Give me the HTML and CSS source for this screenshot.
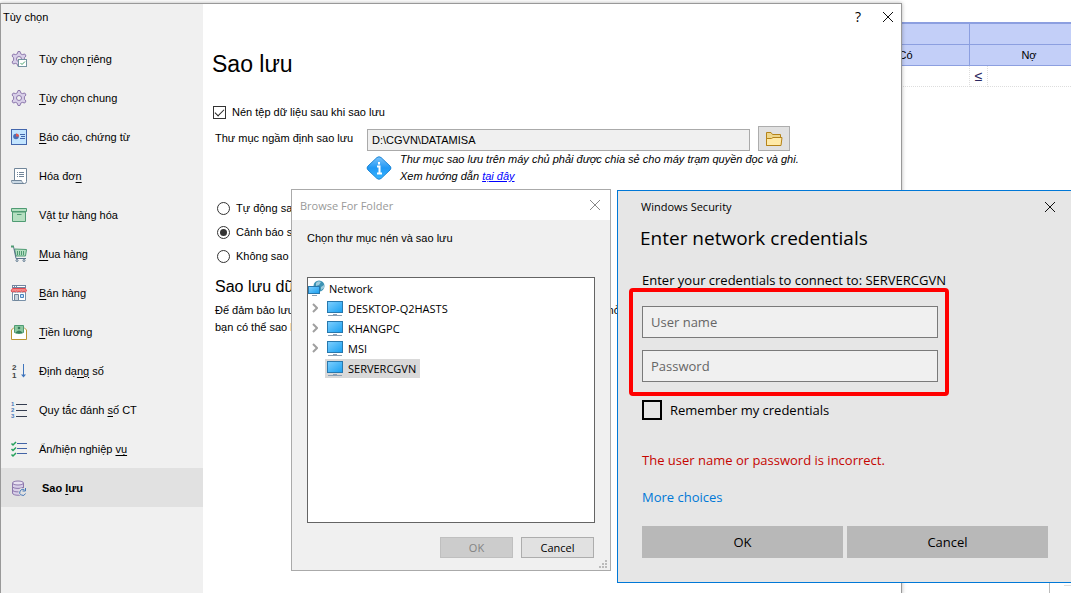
FILE: index.html
```html
<!DOCTYPE html>
<html lang="vi">
<head>
    <meta charset="UTF-8">
    <meta name="viewport" content="width=device-width, initial-scale=1.0">
    <title>Tùy chọn - Sao lưu</title>
    <link rel="stylesheet" href="styles.css">
</head>
<body>
    <svg width="0" height="0" class="defs" aria-hidden="true">
        <defs>
            <linearGradient id="screen" x1="0" y1="0" x2="1" y2="1">
                <stop offset="0" stop-color="#7fd0ff"/>
                <stop offset="1" stop-color="#189ff0"/>
            </linearGradient>
            <linearGradient id="info" x1="0" y1="0" x2="0" y2="1">
                <stop offset="0" stop-color="#7cc4fb"/>
                <stop offset="0.5" stop-color="#1f98f5"/>
                <stop offset="1" stop-color="#38b6ff"/>
            </linearGradient>
            <symbol id="gear" viewBox="0 0 16 16">
                <path d="M7 .5h2l.7 2.300 1.600.8 2.500-.6 1.200 2-1.600 1.800v2.400l1.600 1.800-1.200 2-2.500-.6-1.600.8L9 15.500H7l-.7-2.300-1.600-.8-2.500.6-1.200-2 1.600-1.800V6.800L1 5l1.200-2 2.500.6 1.600-.8z" fill="#d8cfe8" stroke="#8d78ad"/>
                <circle cx="8" cy="8" r="2.500" fill="#f0f0f0" stroke="#8d78ad"/>
            </symbol>
            <symbol id="computer" viewBox="0 0 18 17">
                <rect x="1.500" y="1.500" width="15" height="11" fill="url(#screen)" stroke="#2878ad"/>
                <path d="M7 14.500h4M2 15.500h14" stroke="#8ba0b5"/>
            </symbol>
        </defs>
    </svg>

    <div class="desktop">
        <table class="ledger">
            <colgroup><col class="wide"><col class="narrow"><col></colgroup>
            <thead>
                <tr><th></th><th colspan="2"></th></tr>
                <tr><th>Có</th><th colspan="2">Nợ</th></tr>
            </thead>
            <tbody>
                <tr><td></td><td class="op">≤</td><td></td></tr>
            </tbody>
        </table>
        <div class="app-corner"><hr></div>

        <section class="window options">
            <nav class="sidebar">
                <div class="options-title">Tùy chọn</div>
                <ul>
                    <li><a href="#"><svg viewBox="0 0 16 16"><use href="#gear" width="16" height="16"/><rect x="7.500" y="8.500" width="8" height="7" fill="#fff" stroke="#7392a0"/><path d="M9.500 12l1.500 1.500 3-3" fill="none" stroke="#45a06b"/></svg><span>Tùy chọn <u>r</u>iêng</span></a></li>
                    <li><a href="#"><svg viewBox="0 0 16 16"><use href="#gear" width="16" height="16"/></svg><span><u>T</u>ùy chọn chung</span></a></li>
                    <li><a href="#"><svg viewBox="0 0 16 16"><rect x=".5" y=".5" width="15" height="15" fill="#c3e5ff" stroke="#4366ac"/><circle cx="5" cy="7.500" r="2.800" fill="#4c6eb4"/><path d="M5 7.500V4.500a3 3 0 0 1 3 3z" fill="#e2584e"/><path d="M9 5.500h5M10 7.500h4M9 9.500h5" stroke="#4366ac"/></svg><span><u>B</u>áo cáo, chứng từ</span></a></li>
                    <li><a href="#"><svg viewBox="0 0 16 16"><path d="M3.500 12V.5h12v13q0 2-2 2h-11q-2 0-2-3h10q0 3 2.500 3" fill="#fff" stroke="#71869a"/><path d="M1 13h9l1 2H3q-2 0-2-2z" fill="#c9d8e4"/><path d="M6 4.500h1M8 4.500h5M6 6.500h1M8 6.500h5M6 8.500h1M8 8.500h5" stroke="#71869a"/></svg><span>Hóa đơ<u>n</u></span></a></li>
                    <li><a href="#"><svg viewBox="0 0 16 16"><path d="M1.500 5h13v9.500h-13z" fill="#b5dfc1" stroke="#4f9b73"/><path d="M.5 1.500h15v3H.5z" fill="#b5dfc1" stroke="#4f9b73"/><path d="M6 7.500h4.500" stroke="#4f9b73"/></svg><span>Vật <u>t</u>ư hàng hóa</span></a></li>
                    <li><a href="#"><svg viewBox="0 0 16 16"><path d="M3.500 3l12 .5-1 6.500H5z" fill="#b5dfc1" stroke="#4f9b73"/><path d="M6.500 5v4M8.500 5v4M10.500 5v4M12.500 5v4" stroke="#4f9b73"/><path d="M0 .5h2.500l2.500 12h10" fill="none" stroke="#59748b"/><path d="M0 .5h3" stroke="#4f9b73" stroke-width="2"/><circle cx="6" cy="14.500" r="1" fill="#fff" stroke="#59748b"/><circle cx="13" cy="14.500" r="1" fill="#fff" stroke="#59748b"/></svg><span><u>M</u>ua hàng</span></a></li>
                    <li><a href="#"><svg viewBox="0 0 16 16"><path d="M1.500 7v8.500h13V7z" fill="#fff" stroke="#7890a8"/><path d="M1 0h14v3H1z" fill="#7185a0"/><path d="M2 1.500h1M4 1.500h1M6 1.500h8" stroke="#fff"/><path d="M1.500 3.500h13l1 2.500q-1 2-2.500 0-1.250 2-2.500 0-1.250 2-2.500 0-1.250 2-2.500 0-1.250 2-2.500 0-1.500 2-3 0z" fill="#f58a88" stroke="#e04b52"/><path d="M3.500 9.500h4v6h-4z" fill="#c9d5df" stroke="#71869a"/><path d="M9.500 9.500h3v3h-3z" fill="#c3e5ff" stroke="#4d83bd"/></svg><span><u>B</u>án hàng</span></a></li>
                    <li><a href="#"><svg viewBox="0 0 16 16"><path d="M.5 6L3 3.500h10L15.500 6v9.500H.5z" fill="#fff" stroke="#bb9431"/><path d="M3.500 1.500h9v7l-3 1h-3l-3-1z" fill="#8cc9a0" stroke="#4f9b73"/><circle cx="8" cy="4" r="1.300" fill="#397e5c"/><path d="M5 8q3-3 6 0v1H5z" fill="#397e5c"/></svg><span><u>T</u>iền lương</span></a></li>
                    <li><a href="#"><svg viewBox="0 0 16 16"><text x="1" y="7" class="digit">2</text><text x="1" y="15" class="digit">1</text><path d="M12.500 1v12" stroke="#3f75bd"/><path d="M10 11.500h5l-2.500 3z" fill="#3f75bd"/></svg><span>Định dạ<u>ng</u> số</span></a></li>
                    <li><a href="#"><svg viewBox="0 0 16 16"><text x="0" y="4" class="small-digit">1</text><text x="0" y="10" class="small-digit">2</text><text x="0" y="16" class="small-digit">3</text><path d="M5 2.500h11M5 8.500h11M5 14.500h11" stroke="#343d50"/></svg><span>Quy tắc đánh <u>s</u>ố CT</span></a></li>
                    <li><a href="#"><svg viewBox="0 0 16 16"><path d="M.5 2.500L2 4l3-3M.5 8L2 9.500l3-3M.5 13.500L2 15l3-3" fill="none" stroke="#24a15c" stroke-width="1.500"/><path d="M6 2.500h10M6 7.500h10M6 12.500h10" stroke="#4264a6"/></svg><span>Ẩn/hiện nghiệp <u>vụ</u></span></a></li>
                    <li class="selected"><a href="#"><svg viewBox="0 0 16 16"><path d="M1.500 3v10c0 3 11 3 11 0V3" fill="#d8cfe8" stroke="#8d78ad"/><ellipse cx="7" cy="3" rx="5.500" ry="2" fill="#e8e1f2" stroke="#8d78ad"/><path d="M1.500 6.500c0 2.500 11 2.500 11 0M1.500 10c0 2.500 11 2.500 11 0" fill="none" stroke="#8d78ad"/><circle cx="11.500" cy="12" r="4" fill="#e1e1e1"/><path d="M13.500 10a3 3 0 1 0 1 3.500M14.500 8v3h-3" fill="none" stroke="#4678b8"/></svg><span>Sao <u>l</u>ưu</span></a></li>
                </ul>
            </nav>
            <div class="content">
                <div class="window-buttons">
                    <button type="button" aria-label="Trợ giúp">?</button>
                    <button type="button" aria-label="Đóng"><svg width="12" height="12" viewBox="0 0 12 12"><path d="M1 1l10 10M11 1L1 11" stroke="#111"/></svg></button>
                </div>
                <h1>Sao lưu</h1>
                <label class="check"><input type="checkbox" checked> Nén tệp dữ liệu sau khi sao lưu</label>
                <div class="path-row">
                    <label for="path">Thư mục ngầm định sao lưu</label>
                    <input type="text" id="path" value="D:\CGVN\DATAMISA" readonly>
                    <button type="button" aria-label="Chọn thư mục"><svg width="18" height="16" viewBox="0 0 18 16"><path d="M1.500 14.500V1.500H6l1.500 2h8v11z" fill="#eed68b" stroke="#b58319"/><path d="M1.500 14.500V7.500h5l1.500-1h9l-1 8z" fill="#ffeaa8" stroke="#b58319"/></svg></button>
                </div>
                <div class="note">
                    <svg width="26" height="24" viewBox="0 0 26 24"><path d="M11 1.500q2-1.500 4 0L24 10q2 2 0 4l-9 8.500q-2 1.500-4 0L2 14q-2-2 0-4z" fill="url(#info)" stroke="#1d86d6"/><path d="M13 6v2.500M11 10.500h2.500V17M11 17.500h5" fill="none" stroke="#fff" stroke-width="2"/></svg>
                    <p>Thư mục sao lưu trên máy chủ phải được chia sẻ cho máy trạm quyền đọc và ghi.<br>Xem hướng dẫn <a href="#">tại đây</a></p>
                </div>
                <div class="radios">
                    <label><input type="radio" name="mode"> Tự động sao lưu</label>
                    <label><input type="radio" name="mode" checked> Cảnh báo sao lưu</label>
                    <label><input type="radio" name="mode"> Không sao lưu</label>
                </div>
                <h2>Sao lưu dữ liệu</h2>
                <p class="hint">Để đảm bảo lưu trữ dữ liệu kế toán được an toàn và luôn sẵn sàng khi máy tính hỏng,<br>bạn có thể sao lưu dữ liệu</p>
            </div>
        </section>

        <section class="window browse">
            <header>
                <span>Browse For Folder</span>
                <button type="button" aria-label="Close"><svg width="12" height="12" viewBox="0 0 12 12"><path d="M1 1l10 10M11 1L1 11" stroke="#888"/></svg></button>
            </header>
            <div class="browse-body">
                <p>Chọn thư mục nén và sao lưu</p>
                <ul class="tree">
                    <li class="root"><svg width="18" height="18" viewBox="0 0 18 18"><circle cx="11" cy="7" r="5.500" fill="#3d93b4"/><path d="M8 4q2-3 5-1l-2 3-3 1zM13 8l3-2v3l-3 2z" fill="#9fcbdc"/><rect x=".5" y="7.500" width="11" height="7" fill="url(#screen)" stroke="#2878ad"/><path d="M4 16.500h5" stroke="#8ba0b5"/></svg><span>Network</span></li>
                    <li><svg class="chevron" viewBox="0 0 6 10"><path d="M1 1l4 4-4 4"/></svg><span class="node"><svg><use href="#computer"/></svg>DESKTOP-Q2HASTS</span></li>
                    <li><svg class="chevron" viewBox="0 0 6 10"><path d="M1 1l4 4-4 4"/></svg><span class="node"><svg><use href="#computer"/></svg>KHANGPC</span></li>
                    <li><svg class="chevron" viewBox="0 0 6 10"><path d="M1 1l4 4-4 4"/></svg><span class="node"><svg><use href="#computer"/></svg>MSI</span></li>
                    <li><svg class="chevron" viewBox="0 0 6 10"></svg><span class="node current"><svg><use href="#computer"/></svg>SERVERCGVN</span></li>
                </ul>
                <div class="browse-buttons">
                    <button type="button" disabled>OK</button>
                    <button type="button">Cancel</button>
                </div>
            </div>
            <svg class="grip" width="8" height="8" viewBox="0 0 8 8"><path d="M6 0h2v2H6zM3 3h2v2H3zM6 3h2v2H6zM0 6h2v2H0zM3 6h2v2H3zM6 6h2v2H6z" fill="#bbb"/></svg>
        </section>

        <section class="window security">
            <header>
                <span>Windows Security</span>
                <button type="button" aria-label="Close"><svg width="12" height="12" viewBox="0 0 12 12"><path d="M1 1l10 10M11 1L1 11" stroke="#111"/></svg></button>
            </header>
            <h2>Enter network credentials</h2>
            <p>Enter your credentials to connect to: SERVERCGVN</p>
            <div class="fields">
                <input type="text" placeholder="User name" aria-label="User name">
                <input type="password" placeholder="Password" aria-label="Password">
            </div>
            <label class="remember"><input type="checkbox"> Remember my credentials</label>
            <p class="error">The user name or password is incorrect.</p>
            <a class="more" href="#">More choices</a>
            <div class="security-buttons">
                <button type="button">OK</button>
                <button type="button">Cancel</button>
            </div>
        </section>
    </div>
</body>
</html>
```
FILE: styles.css
```css
* {
    box-sizing: border-box;
}

body {
    margin: 0;
    font-family: "Liberation Sans", Arial, sans-serif;
    font-size: 11px;
    color: #000;
}

h1, h2, p, ul {
    margin: 0;
    padding: 0;
    font-weight: normal;
}

ul {
    list-style: none;
}

button, input {
    font: inherit;
    color: inherit;
    margin: 0;
}

.defs {
    position: absolute;
}

.desktop {
    position: relative;
    height: 100vh;
    overflow: hidden;
    background: #fff;
    display: flex;
    flex-direction: column;
    justify-content: space-between;
    align-items: flex-end;
}

/* application behind the dialogs */
.ledger {
    width: 248px;
    margin: 22px -18px 0 0;
    border-collapse: collapse;
    table-layout: fixed;
    border-top: 2px solid #8c9fe0;
}

.ledger .wide {
    width: 128px;
}

.ledger .narrow {
    width: 18px;
}

.ledger th {
    height: 21px;
    padding: 0;
    background: #c3cff8;
    border: 1px solid #8c9fe0;
    font-weight: normal;
}

.ledger td {
    height: 21px;
    padding: 0;
    border: 1px dotted #ddd;
}

.ledger .op {
    text-align: center;
    font-size: 14px;
    line-height: 16px;
    color: #2c2860;
}

.app-corner {
    width: 22px;
    height: 10px;
    padding: 2px 0 0 14px;
    border-left: 1px solid #bbb;
}

.app-corner hr {
    margin: 0;
    border: 0;
    border-top: 1px solid #ddd;
}

.window {
    position: absolute;
}

.window header button,
.window-buttons button {
    width: 30px;
    height: 26px;
    padding: 0;
    border: 0;
    background: none;
    display: grid;
    place-items: center;
}

/* options window */
.options {
    top: 3px;
    left: 0;
    bottom: -2px;
    width: 902px;
    display: flex;
    background: #fff;
    border: 1px solid #999;
    box-shadow: 0 0 4px rgba(0, 0, 0, 0.3);
}

.sidebar {
    width: 202px;
    background: #f0f0f0;
}

.options-title {
    height: 35px;
    padding: 6px 2px;
    line-height: 14px;
}

.sidebar a {
    display: flex;
    align-items: center;
    gap: 12px;
    height: 39px;
    padding-left: 10px;
    color: #000;
    text-decoration: none;
}

.sidebar svg {
    flex: none;
    width: 16px;
    height: 16px;
    overflow: visible;
}

.sidebar u {
    text-underline-offset: 2px;
}

.sidebar .selected {
    background: #e1e1e1;
    font-weight: bold;
}

.sidebar .selected a {
    gap: 15px;
}

.digit {
    font-size: 8px;
    font-weight: bold;
    fill: #444;
}

.small-digit {
    font-size: 6px;
    font-weight: bold;
    fill: #4678b8;
}

.content {
    flex: 1;
    padding-left: 12px;
}

.window-buttons {
    display: flex;
    justify-content: flex-end;
    margin-right: -2px;
    font: 14px/26px "Open Sans", sans-serif;
}

.content h1 {
    margin: 18px 0 0 -3px;
    font-size: 23px;
    line-height: 32px;
}

.content input[type="checkbox"],
.content input[type="radio"] {
    appearance: none;
    width: 13px;
    height: 13px;
    background: #fff;
    border: 1px solid #333;
    display: grid;
    place-items: center;
}

.content input[type="radio"] {
    border-radius: 50%;
}

.content input[type="checkbox"]:checked::after {
    content: "";
    width: 8px;
    height: 4px;
    border: solid #222;
    border-width: 0 0 1px 1px;
    transform: translateY(-1px) rotate(-45deg);
}

.content input[type="radio"]:checked::after {
    content: "";
    width: 7px;
    height: 7px;
    border-radius: 50%;
    background: #333;
}

.content label {
    display: flex;
    align-items: center;
    gap: 6px;
}

.content .check {
    height: 24px;
    margin: 20px 0 0 -2px;
}

.path-row {
    display: flex;
    align-items: flex-end;
    gap: 8px;
    height: 26px;
    margin-top: 1px;
}

.path-row label {
    align-self: center;
    width: 144px;
    white-space: nowrap;
}

.path-row input {
    width: 383px;
    height: 22px;
    padding: 0 4px;
    background: #f0f0f0;
    border: 1px solid #aaa;
}

.path-row button {
    width: 32px;
    height: 25px;
    padding: 0;
    background: #e1e1e1;
    border: 1px solid #adadad;
    display: grid;
    place-items: center;
}

.note {
    display: flex;
    align-items: center;
    gap: 8px;
    margin-left: 151px;
    font-style: italic;
    line-height: 17px;
}

.note a {
    color: #00f;
}

.radios {
    margin: 11px 0 0 2px;
}

.radios label {
    height: 24px;
}

.content h2 {
    margin-top: 7px;
    font-size: 16px;
    line-height: 24px;
}

.hint {
    margin-top: 3px;
    line-height: 17px;
    white-space: nowrap;
}

/* folder picker */
.browse {
    top: 189px;
    left: 291px;
    width: 320px;
    height: 382px;
    background: #f0f0f0;
    border: 1px solid #aaa;
    font-family: "Open Sans", "Noto Sans", sans-serif;
}

.browse header {
    display: flex;
    align-items: center;
    justify-content: space-between;
    height: 30px;
    padding-left: 8px;
    background: #fff;
    color: #999;
}

.browse-body {
    padding: 10px 15px;
}

.browse-body p {
    font-family: "Liberation Sans", Arial, sans-serif;
    line-height: 16px;
}

.tree {
    height: 246px;
    margin-top: 31px;
    background: #fff;
    border: 1px solid #646464;
}

.tree li {
    display: flex;
    align-items: center;
    gap: 7px;
    height: 20px;
    padding-left: 4px;
}

.tree .root {
    padding-left: 0;
    gap: 3px;
}

.chevron {
    width: 6px;
    height: 10px;
    fill: none;
    stroke: #a0a0a0;
    stroke-width: 2px;
}

.node {
    display: flex;
    align-items: center;
    gap: 4px;
    height: 19px;
    padding: 0 4px 0 1px;
}

.node svg {
    width: 18px;
    height: 17px;
}

.current {
    background: #d9d9d9;
}

.browse-buttons {
    display: flex;
    justify-content: flex-end;
    gap: 8px;
    margin: 14px 1px 0 0;
}

.browse-buttons button {
    width: 73px;
    height: 21px;
    padding: 0;
    background: #e1e1e1;
    border: 1px solid #adadad;
}

.browse-buttons button:disabled {
    background: #ccc;
    border-color: #bfbfbf;
    color: #838383;
}

.grip {
    position: absolute;
    right: 3px;
    bottom: 2px;
}

/* credentials prompt */
.security {
    top: 190px;
    left: 617px;
    width: 456px;
    height: 393px;
    padding: 0 24px;
    background: #e6e6e6;
    border: 1px solid #0078d7;
    font-family: "Open Sans", "Noto Sans", sans-serif;
    font-size: 13px;
    line-height: 20px;
}

.security header {
    display: flex;
    align-items: center;
    justify-content: space-between;
    height: 32px;
    margin: 0 -17px 0 -1px;
    font-size: 11px;
}

.security h2 {
    margin: 1px 0 18px -2px;
    font-size: 19px;
    line-height: 28px;
}

.fields {
    position: relative;
    display: grid;
    gap: 12px;
    width: 296px;
    margin-top: 16px;
}

.fields::after {
    content: "";
    position: absolute;
    inset: -18px -11px -14px -13px;
    border: 4px solid #f00;
    border-radius: 4px;
    pointer-events: none;
}

.fields input {
    height: 32px;
    padding: 0 8px;
    background: #f0f0f0;
    border: 1px solid #7a7a7a;
}

.fields input::placeholder {
    color: #666;
}

.remember {
    display: flex;
    align-items: center;
    gap: 8px;
    margin: 18px 0 30px;
}

.remember input {
    appearance: none;
    width: 20px;
    height: 20px;
    border: 2px solid #000;
}

.error {
    color: #c50500;
}

.more {
    display: block;
    margin: 17px 0 19px;
    color: #0078d7;
    text-decoration: none;
}

.security-buttons {
    display: grid;
    grid-template-columns: 1fr 1fr;
    gap: 4px;
}

.security-buttons button {
    height: 32px;
    background: #b8b8b8;
    border: 0;
}
```
